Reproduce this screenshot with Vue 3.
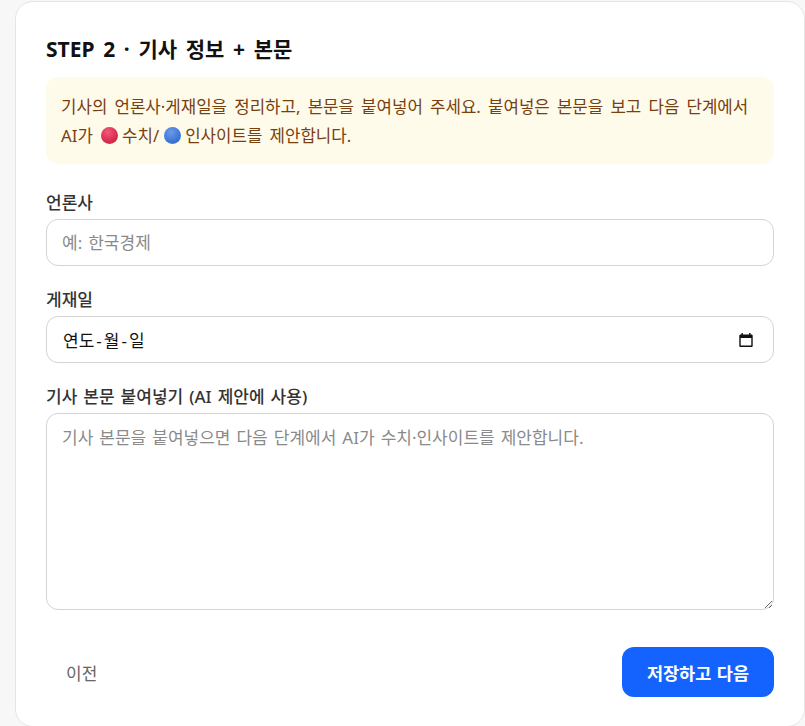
<script setup>
const fields = {
  press: '예: 한국경제',
  body: '기사 본문을 붙여넣으면 다음 단계에서 AI가 수치·인사이트를 제안합니다.'
}
</script>

<template>
  <div class="page">
    <section class="card">
      <h2 class="title">STEP 2 · 기사 정보 + 본문</h2>

      <div class="notice">
        기사의 언론사·게재일을 정리하고, 본문을 붙여넣어 주세요. 붙여넣은 본문을 보고 다음 단계에서<br />
        AI가 <span class="dot red"></span>수치/<span class="dot blue"></span>인사이트를 제안합니다.
      </div>

      <div class="field">
        <label class="label">언론사</label>
        <input class="input" type="text" :placeholder="fields.press" />
      </div>

      <div class="field">
        <label class="label">게재일</label>
        <div class="input date">
          <span class="date-text">연도<i>-</i>월<i>-</i>일</span>
          <svg class="cal" width="16" height="16" viewBox="0 0 16 16">
            <path d="M3.5 1v1.5H2.6c-.8 0-1.3.6-1.3 1.3v9.9c0 .7.5 1.3 1.3 1.3h10.8c.8 0 1.3-.6 1.3-1.3V3.8c0-.7-.5-1.3-1.3-1.3h-.9V1h-1.4v1.5H4.9V1H3.5zM2.7 6h10.6v7.6H2.7V6z" fill="#111" />
          </svg>
        </div>
      </div>

      <div class="field">
        <label class="label">기사 본문 붙여넣기 (AI 제안에 사용)</label>
        <textarea class="input area" :placeholder="fields.body"></textarea>
      </div>

      <div class="actions">
        <button class="btn-prev">이전</button>
        <button class="btn-next">저장하고 다음</button>
      </div>
    </section>
  </div>
</template>

<style>
html,
body {
  margin: 0;
  background: #f7f7f7;
}
</style>

<style scoped>
.page {
  height: 726px;
  padding: 1px 0 0 15px;
  box-sizing: border-box;
  overflow: hidden;
  font-family: "Noto Sans", "Noto Sans CJK KR", sans-serif;
}

.card {
  height: 726px;
  box-sizing: border-box;
  padding: 30px 30px 0;
  background: #fff;
  border: 1px solid #e5e5e5;
  border-radius: 18px;
}

.title {
  margin: 0 0 11px;
  font-size: 21px;
  line-height: 34px;
  font-weight: 700;
  word-spacing: 3.2px;
  color: #111;
}

.notice {
  padding: 15px 15px 13px;
  height: 87px;
  box-sizing: border-box;
  background: #fffbeb;
  border-radius: 12px;
  font-size: 16.8px;
  line-height: 29px;
  word-spacing: 2.8px;
  white-space: nowrap;
  color: #78400f;
}

.dot {
  display: inline-block;
  width: 17px;
  height: 17px;
  margin: 0 4px 0 0;
  border-radius: 50%;
  vertical-align: -2px;
}

.dot.red {
  margin-left: 1px;
  background: radial-gradient(circle at 40% 30%, #f2597a, #d92c4c 60%, #b5264a);
}

.dot.blue {
  margin-left: 5px;
  background: radial-gradient(circle at 40% 30%, #6a9be8, #3f76d6 60%, #2f5fb8);
}

.field {
  margin-top: 25px;
}

.field + .field {
  margin-top: 20px;
}

.label {
  display: block;
  margin-bottom: 2px;
  font-size: 17px;
  line-height: 28px;
  font-weight: 500;
  word-spacing: 1.6px;
  color: #333;
}

.input {
  display: block;
  width: 100%;
  height: 47px;
  box-sizing: border-box;
  padding: 0 15px;
  border: 1px solid #d4d4d4;
  border-radius: 12px;
  background: #fff;
  font-family: inherit;
  font-size: 17px;
  word-spacing: 1.6px;
  color: #111;
  outline: none;
}

.input::placeholder {
  color: #8a8a8a;
  opacity: 1;
}

.date {
  display: flex;
  align-items: center;
  justify-content: space-between;
  padding-left: 16px;
  padding-right: 19px;
}

.date-text i {
  font-style: normal;
  margin: 0 2px;
}

.area {
  height: 197px;
  padding: 12px 15px;
  line-height: 24px;
  resize: vertical;
}

.actions {
  display: flex;
  align-items: center;
  justify-content: space-between;
  margin-top: 37px;
}

.btn-prev {
  padding: 0 20px;
  height: 50px;
  border: 0;
  background: transparent;
  font-family: inherit;
  font-size: 17px;
  color: #666;
}

.btn-next {
  width: 152px;
  height: 50px;
  border: 0;
  border-radius: 12px;
  background: #1463ff;
  font-family: inherit;
  font-size: 17.5px;
  font-weight: 700;
  word-spacing: 1px;
  color: #fff;
}
</style>
